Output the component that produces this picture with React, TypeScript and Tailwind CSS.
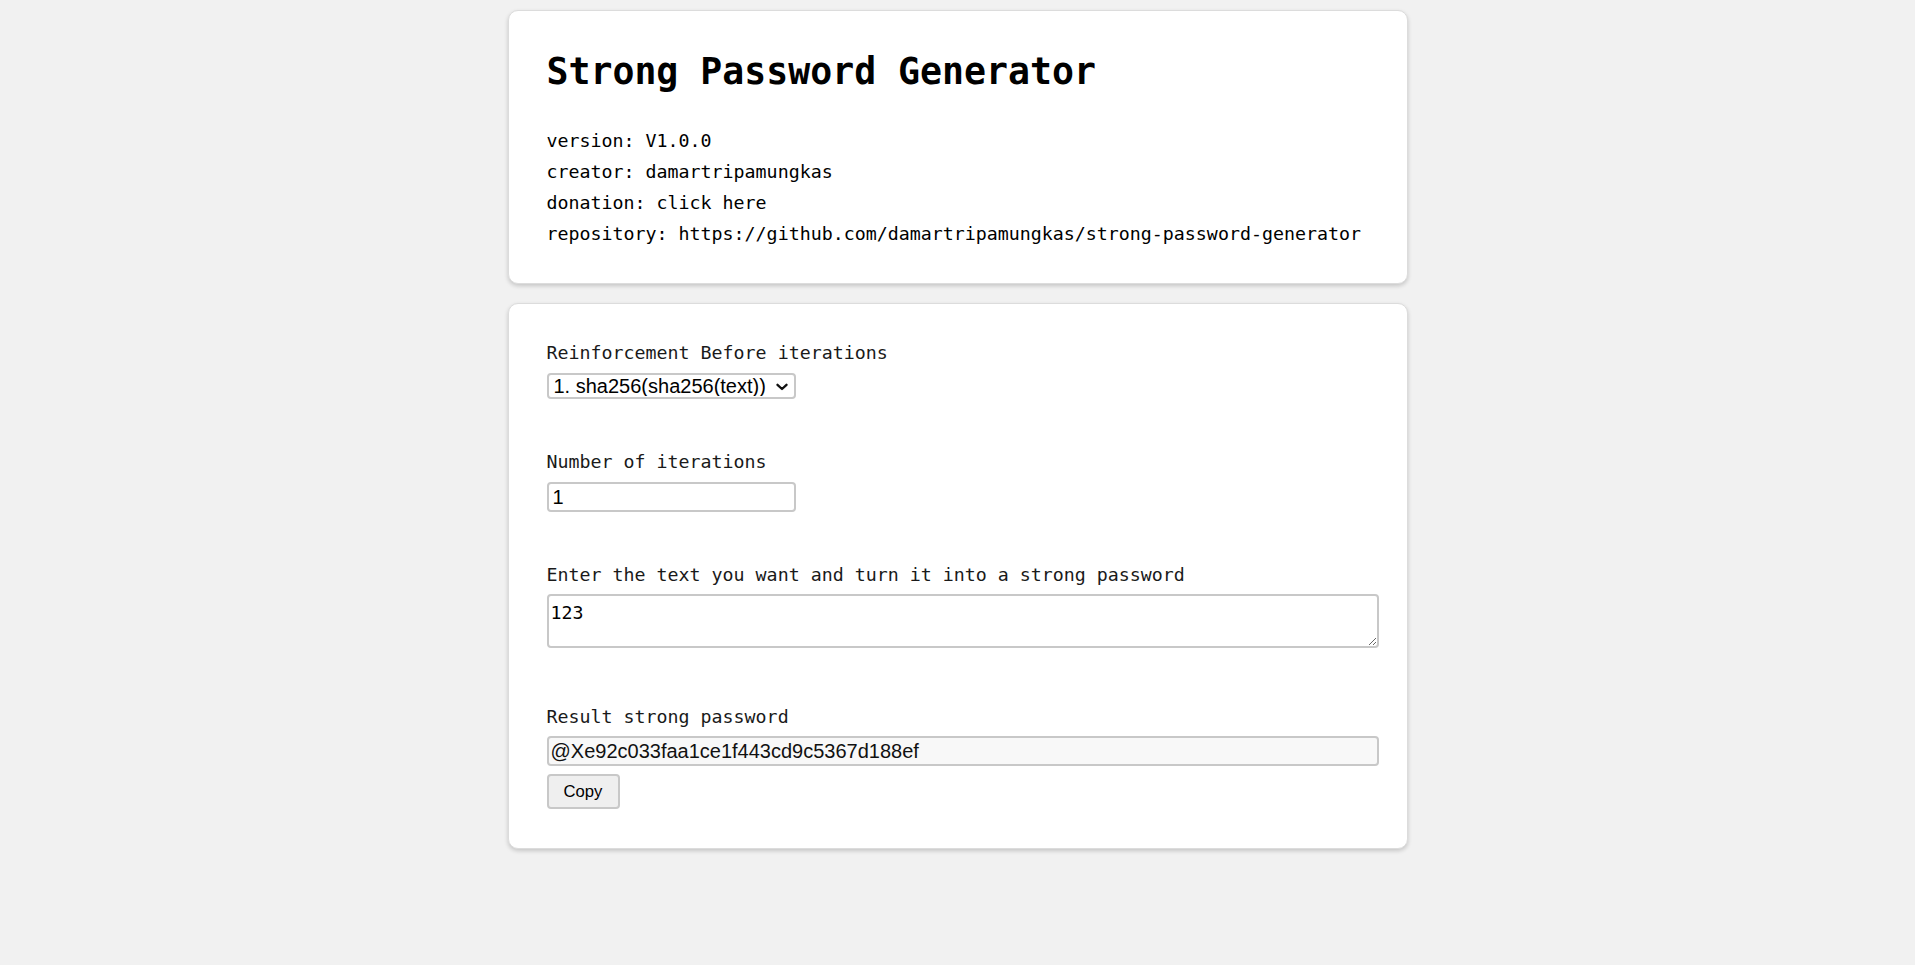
import { useState } from "react";

const mono = "font-['DejaVu_Sans_Mono','Liberation_Mono',monospace]";
const sans = "font-['Liberation_Sans',Arial,sans-serif]";

const card =
	"mx-auto w-[900px] rounded-[10px] border border-[#dcdcdc] bg-white shadow-[0_2px_4px_rgba(0,0,0,0.18)]";

const fieldLabel = `block text-[18.3px] leading-6 text-[#1a1a1a] ${mono}`;

export default function App() {
	const [method, setMethod] = useState("1");
	const [iterations, setIterations] = useState("1");
	const [text, setText] = useState("123");

	return (
		<div className="min-h-screen bg-[#f1f1f1] pt-[10px] pb-10">
			{/* info card */}
			<div className={`${card} px-[38px] pt-[39px] pb-[34px]`}>
				<h1
					className={`text-[36.5px] leading-[44px] font-bold text-black ${mono}`}
				>
					Strong Password Generator
				</h1>
				<div className={`mt-[31px] text-[18.3px] leading-[31px] text-black ${mono}`}>
					<div>version: V1.0.0</div>
					<div>creator: damartripamungkas</div>
					<div>donation: click here</div>
					<div>
						repository:
						https://github.com/damartripamungkas/strong-password-generator
					</div>
				</div>
			</div>

			{/* generator card */}
			<div className={`${card} mt-[19px] px-[38px] pt-[37px] pb-[39px]`}>
				<label className={fieldLabel}>Reinforcement Before iterations</label>
				<div className="relative mt-2 h-[26px] w-[249px]">
					<select
						value={method}
						onChange={(e) => setMethod(e.target.value)}
						className={`h-full w-full appearance-none rounded-[4px] border-2 border-[#c8c8c8] bg-white pl-[5px] text-[20px] leading-none text-black outline-none ${sans}`}
					>
						<option value="1">1. sha256(sha256(text))</option>
						<option value="2">2. sha512(sha256(text))</option>
					</select>
					<svg
						className="pointer-events-none absolute top-[10px] right-[8px]"
						width="12"
						height="8"
						viewBox="0 0 12 8"
						fill="none"
					>
						<path
							d="M1.5 1.8 L6 6 L10.5 1.8"
							stroke="#111"
							strokeWidth="2.3"
							strokeLinecap="round"
							strokeLinejoin="round"
						/>
					</svg>
				</div>

				<label className={`${fieldLabel} mt-[51px]`}>Number of iterations</label>
				<input
					type="text"
					value={iterations}
					onChange={(e) => setIterations(e.target.value)}
					className={`mt-2 block h-[30px] w-[249px] rounded-[4px] border-2 border-[#c8c8c8] bg-white pl-[4px] text-[20px] text-black outline-none ${sans}`}
				/>

				<label className={`${fieldLabel} mt-[51px]`}>
					Enter the text you want and turn it into a strong password
				</label>
				<textarea
					value={text}
					onChange={(e) => setText(e.target.value)}
					className={`mt-[7px] block h-[54px] w-[832px] rounded-[4px] border-2 border-[#c8c8c8] bg-white px-[2px] pt-[3px] text-[18.3px] text-black outline-none ${mono}`}
				/>

				<label className={`${fieldLabel} mt-[57px]`}>Result strong password</label>
				<input
					type="text"
					readOnly
					value="@Xe92c033faa1ce1f443cd9c5367d188ef"
					className={`mt-[7px] block h-[30px] w-[832px] rounded-[4px] border-2 border-[#c8c8c8] bg-[#f8f8f8] pl-[2px] text-[20px] text-[#111] outline-none ${sans}`}
				/>
				<button
					type="button"
					onClick={() =>
						navigator.clipboard?.writeText("@Xe92c033faa1ce1f443cd9c5367d188ef")
					}
					className={`mt-2 flex h-[35px] w-[73px] items-center justify-center rounded-[4px] border-2 border-[#c8c8c8] bg-[#efefef] text-[16.67px] text-black ${sans}`}
				>
					Copy
				</button>
			</div>
		</div>
	);
}
